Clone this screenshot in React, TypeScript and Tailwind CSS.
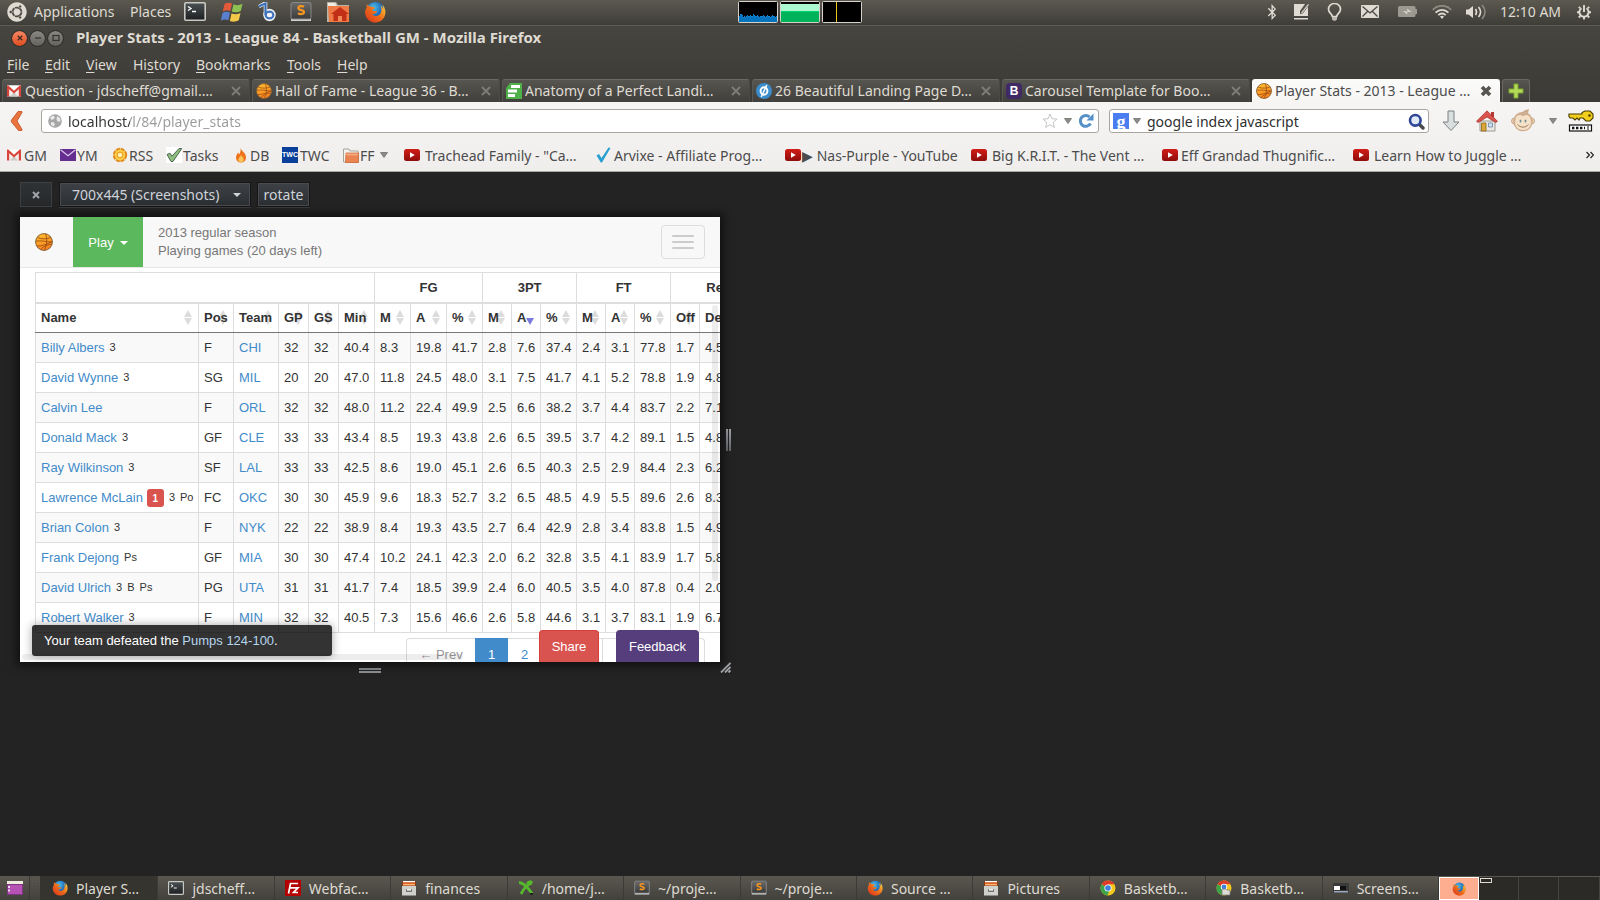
import React from "react";
import { FaUbuntu, FaBluetoothB } from "react-icons/fa";

type IconProps = { className?: string };

/* ---------- shared icons ---------- */

const Firefox = ({ className = "size-4" }: IconProps) => (
  <svg viewBox="0 0 24 24" className={className} aria-hidden="true">
    <defs>
      <linearGradient id="fx-body" x1="0" y1="1" x2="1" y2="0">
        <stop offset="0" stopColor="#d8301c" />
        <stop offset="0.5" stopColor="#ee6b1a" />
        <stop offset="1" stopColor="#ffd93b" />
      </linearGradient>
      <radialGradient id="fx-globe" cx="0.4" cy="0.3" r="0.8">
        <stop offset="0" stopColor="#4cc0ee" />
        <stop offset="0.6" stopColor="#1c62b0" />
        <stop offset="1" stopColor="#122a66" />
      </radialGradient>
    </defs>
    <circle cx="12.5" cy="11.5" r="10.5" fill="url(#fx-globe)" />
    <path
      d="M3 3.500c-.4 1.300-.4 2.400 0 3.600C1.300 9.500.7 12.300 1.500 15.200 3 20.200 7.300 23.400 12.400 23.400 18.600 23.400 23.400 18.500 23.400 12.300c0-3.300-1.300-6.500-3.600-8.600 1 2 1.300 3.600 1.100 5.400-.6-2-1.500-3.200-3-4.200 2.200 4.500 1.100 8.700-1.700 10.500-2.600 1.700-6 .9-7.300-1.300 1.500.4 2.900.1 3.900-.9.700-.7 1.500-.6 1.500-1.200 0-.7-.9-1.200-2-1.100-1.300.1-2.600.4-3.200-.5.3-1.100 1.600-1.600 2.700-2.200-.3-1.500-1.700-2.200-3.600-2C6.800 5.800 4.500 5.500 3 3.500z"
      fill="url(#fx-body)"
    />
  </svg>
);

const Basketball = ({ className = "size-4" }: IconProps) => (
  <svg viewBox="0 0 18 18" className={className} aria-hidden="true">
    <defs>
      <linearGradient id="ball" x1="0.2" y1="0" x2="0.6" y2="1">
        <stop offset="0" stopColor="#ffbe2e" />
        <stop offset="1" stopColor="#fb7d1e" />
      </linearGradient>
    </defs>
    <circle cx="9" cy="9" r="8.400" fill="url(#ball)" stroke="#8a6238" strokeWidth="1" />
    <g fill="none" stroke="#8f4a12" strokeWidth="0.800">
      <path d="M1 8.200c5-1 10 .5 15.800 1" />
      <path d="M2.500 4.600c5 1.800 9 1.500 13.500-.2" />
      <path d="M1.800 13c5 .2 10-1.500 15.400-4.500" />
      <path d="M10.500.8c2 5 1.500 11-1 16.300" />
      <path d="M5.500 16.500c3-3.500 7-5 11-5.200" />
    </g>
  </svg>
);

const Gmail = ({ className = "h-3.5 w-3.5" }: IconProps) => (
  <svg viewBox="0 0 14 12" className={className} aria-hidden="true">
    <rect x="0" y="0.500" width="14" height="11" fill="#f3f0ee" />
    <path d="M0 .5h14L7 7z" fill="#fff" />
    <path d="M3 11.500L7 7l4 4.500z" fill="#cfcac7" />
    <path d="M0 11.500V.5h1.300L7 5.800 12.700.5H14v11h-2.200V4.300L7 8.600 2.200 4.300v7.200z" fill="#d8453a" />
  </svg>
);

const YouTube = ({ className = "h-4 w-4" }: IconProps) => (
  <svg viewBox="0 0 16 16" className={className} aria-hidden="true">
    <defs>
      <linearGradient id="yt" x1="0" y1="0" x2="0" y2="1">
        <stop offset="0" stopColor="#d11d17" />
        <stop offset="1" stopColor="#8f0d0b" />
      </linearGradient>
    </defs>
    <rect y="2" width="16" height="12" rx="2.500" fill="url(#yt)" />
    <path d="M6 5.200v5.600L10.800 8z" fill="#fff" />
  </svg>
);

const Terminal = ({ className = "size-4" }: IconProps) => (
  <svg viewBox="0 0 22 19" className={className} aria-hidden="true">
    <defs>
      <linearGradient id="term" x1="0" y1="0" x2="0" y2="1">
        <stop offset="0" stopColor="#4b5254" />
        <stop offset="1" stopColor="#1c1f20" />
      </linearGradient>
    </defs>
    <rect x="0.800" y="0.800" width="20.400" height="17.400" rx="1" fill="url(#term)" stroke="#c9c9c4" strokeWidth="1.600" />
    <path d="M4 4.500l3 2-3 2M8 9.500h4" fill="none" stroke="#fff" strokeWidth="1.300" />
  </svg>
);

const Sublime = ({ className = "size-4" }: IconProps) => (
  <svg viewBox="0 0 22 20" className={className} aria-hidden="true">
    <defs>
      <linearGradient id="subl" x1="0" y1="0" x2="0" y2="1">
        <stop offset="0" stopColor="#6b6b6b" />
        <stop offset="1" stopColor="#3a3a3a" />
      </linearGradient>
    </defs>
    <path d="M1 1.500h20V19H1z" fill="#cfcfcf" />
    <rect x="1" y="0.500" width="20" height="16.500" rx="1.500" fill="url(#subl)" stroke="#888" />
    <path
      d="M14 4.800c-2-1.200-5.600-1-5.600 1.300 0 2.800 5.600 1.400 5.600 4 0 2.300-4 2.400-6 1.200"
      fill="none"
      stroke="#f7951e"
      strokeWidth="2.200"
    />
  </svg>
);

const FileCabinet = ({ className = "size-4" }: IconProps) => (
  <svg viewBox="0 0 16 16" className={className} aria-hidden="true">
    <path d="M1 1h14v5H1z" fill="#8a3a12" />
    <path d="M2 1h12v1.500H2z" fill="#fff" />
    <path d="M2 2.500h12V4H2z" fill="#e8641b" />
    <path d="M2 4h12v1.500H2z" fill="#f8b27a" />
    <path d="M1 6h14v9.500H1z" fill="#d0d0cd" />
    <path d="M5 9h6v3H5z" fill="#777" />
    <path d="M6 9h4v1.500H6z" fill="#f5f5f5" />
  </svg>
);

const Chrome = ({ className = "size-4" }: IconProps) => (
  <svg viewBox="0 0 16 16" className={className} aria-hidden="true">
    <circle cx="8" cy="8" r="7.500" fill="#f4c91c" />
    <path d="M8 8L1.500 4.200A7.500 7.500 0 0 1 14.500 4.200H8z" fill="#dc3b2c" />
    <path d="M8 8L1.500 4.200a7.500 7.500 0 0 0 5.700 11.200L10.500 9z" fill="#3ba34a" />
    <circle cx="8" cy="8" r="3.600" fill="#fff" />
    <circle cx="8" cy="8" r="2.800" fill="#3f7fe0" />
  </svg>
);

const ChromeWindow = ({ className = "size-4" }: IconProps) => (
  <svg viewBox="0 0 16 16" className={className} aria-hidden="true">
    <circle cx="8" cy="8" r="7.500" fill="#f4c91c" />
    <path d="M8 8L1.500 4.200A7.500 7.500 0 0 1 14.500 4.200H8z" fill="#dc3b2c" />
    <path d="M8 8L1.500 4.200a7.500 7.500 0 0 0 5.700 11.200L10.500 9z" fill="#3ba34a" />
    <circle cx="8" cy="7" r="3.200" fill="#fff" />
    <circle cx="8" cy="7" r="2.400" fill="#3f7fe0" />
    <path d="M6 9h4l1 1h3v5H6z" fill="#dedbd2" stroke="#777" strokeWidth="0.700" />
  </svg>
);

const TriangleDown = ({ className = "" }: IconProps) => (
  <svg viewBox="0 0 8 6" className={`h-1.5 w-2 shrink-0 ${className}`} aria-hidden="true">
    <path d="M.5.5h7L4 5.500z" fill="#8b8b88" stroke="#70706c" strokeWidth="0.800" />
  </svg>
);

/* ---------- top panel ---------- */

const BPlayer = () => (
  <svg viewBox="0 0 18 20" className="h-5 w-[18px]" aria-hidden="true">
    <path d="M1 4.500L7.500 1v13" fill="none" stroke="#f2f4f7" strokeWidth="3.600" />
    <circle cx="11.500" cy="13" r="5.200" fill="#f2f4f7" stroke="#f2f4f7" strokeWidth="2" />
    <path d="M1 4.300L7.500 1.500V13" fill="none" stroke="#3a6fb8" strokeWidth="2.200" />
    <ellipse cx="11.500" cy="13" rx="3.800" ry="3.300" fill="none" stroke="#3f74bd" strokeWidth="2.200" />
  </svg>
);

const HomeFolder = () => (
  <svg viewBox="0 0 24 22" className="h-[22px] w-6" aria-hidden="true">
    <path d="M1 1h9l2 3h11v17H1z" fill="#b9b3a8" />
    <path d="M2 2h7l2 3h11v3H2z" fill="#f0ece4" />
    <path d="M2 5h21v16H3z" fill="#ee7a45" />
    <path d="M14 6l9 7h-2.500v7H7.500v-7H5z" fill="#c22f17" />
    <path d="M12 15h4v5h-4z" fill="#f08a58" />
  </svg>
);

const WindowsFlag = () => (
  <svg viewBox="0 0 24 22" className="h-[22px] w-6" aria-hidden="true">
    <path d="M4.500 3C7 1.300 9.500 1.300 12 2.600L10.300 10C7.800 8.800 5.300 9 2.800 10.500z" fill="#e4593a" />
    <path d="M13.500 3.200c2.800 1.300 5.700 1.300 9-.4L20.800 10c-3 1.600-6 1.700-9 .6z" fill="#8fc152" />
    <path d="M2.500 12C5 10.500 7.500 10.500 10 11.700L8.300 19.300C5.800 18 3.300 18.200.8 19.700z" fill="#5a7fd0" />
    <path d="M11.500 12.400c2.900 1.200 5.900 1.100 9-.5l-1.700 7.300c-3 1.700-6 1.900-9 .8z" fill="#f3c84a" />
  </svg>
);

const cpu = [6, 8, 8, 7, 5, 6, 5, 6, 7, 6, 6, 7, 6, 6, 8, 7, 6, 6, 7, 6, 5, 6, 6, 6, 7, 6, 5, 6, 7, 6, 6, 5, 6, 7, 6, 6, 5, 6];

const Monitors = () => (
  <div className="flex gap-0.5" aria-label="System monitor">
    <svg viewBox="0 0 40 22" className="h-[22px] w-10">
      <rect x="0.500" y="0.500" width="39" height="21" rx="1" fill="#000" stroke="#d5d2cb" />
      {cpu.map((h, i) => (
        <React.Fragment key={i}>
          <rect x={i + 1} y={21 - h} width="1" height={h} fill="#0d86d8" />
          <rect x={i + 1} y={22 - h} width="1" height={h - 1} fill="#0673bd" />
        </React.Fragment>
      ))}
    </svg>
    <svg viewBox="0 0 40 22" className="h-[22px] w-10">
      <rect x="0.500" y="0.500" width="39" height="21" rx="1" fill="#000" stroke="#d5d2cb" />
      <rect x="1" y="3" width="38" height="8" fill="#aaf7d0" />
      <rect x="1" y="10" width="38" height="11" fill="#00b35a" />
      <rect x="1" y="10" width="38" height="1" fill="#00d46c" />
    </svg>
    <svg viewBox="0 0 40 22" className="h-[22px] w-10">
      <rect x="0.500" y="0.500" width="39" height="21" rx="1" fill="#000" stroke="#d5d2cb" />
      <rect x="14" y="1" width="1" height="20" fill="#e8c81e" />
    </svg>
  </div>
);

const Tray = () => (
  <div className="flex flex-1 items-center justify-end pr-2 text-[#dfdbd2]">
    <FaBluetoothB className="mr-4 h-4 w-2.5" />
    <svg viewBox="0 0 17 17" className="mr-[17px] size-[17px]" aria-hidden="true">
      <path d="M1 1h11l-5 7v3l3-1 5-7v10H1z" fill="#dfdbd2" />
      <path d="M8 9.500L15 .8l1.300 1L9.500 10.300l-2 .7z" fill="#dfdbd2" stroke="#4a4843" strokeWidth="0.500" />
      <path d="M1 15h14v1.500H1z" fill="#dfdbd2" />
    </svg>
    <svg viewBox="0 0 15 18" className="mr-[19px] h-[18px] w-[15px]" aria-hidden="true">
      <path
        d="M5.300 13.500c0-2.500-3.800-3.500-3.800-7.200a6 5.800 0 0 1 12 0c0 3.700-3.800 4.700-3.800 7.200z"
        fill="none"
        stroke="#dfdbd2"
        strokeWidth="1.700"
      />
      <path d="M5 14h5v2.500l-1.500 1.200h-2L5 16.500z" fill="#bdb9b0" />
    </svg>
    <svg viewBox="0 0 18 13" className="mr-[19px] h-[13px] w-[18px]" aria-hidden="true">
      <rect width="18" height="13" rx="0.800" fill="#dfdbd2" />
      <path d="M1.500 1.500L9 8l7.500-6.500M1.500 11.500l5-5M16.500 11.500l-5-5" fill="none" stroke="#4a4843" strokeWidth="1.300" />
    </svg>
    <svg viewBox="0 0 19 11" className="mr-[15px] h-[11px] w-[19px]" aria-hidden="true">
      <path d="M1.500 0h14.500a1.500 1.500 0 0 1 1.500 1.500V3H19v5h-1.500v1.500A1.500 1.500 0 0 1 16 11H1.500A1.500 1.500 0 0 1 0 9.500v-8A1.500 1.500 0 0 1 1.500 0z" fill="#9c9990" />
      <path d="M4.500 4.800l5 1-.5-3 5 3.500-5-.9.500 3z" fill="#dfdbd2" />
    </svg>
    <svg viewBox="0 0 20 14" className="mr-3.5 h-3.5 w-5" aria-hidden="true" fill="none" strokeWidth="1.800">
      <path d="M.8 4.800C6-.6 14-.6 19.200 4.800" stroke="#8d8a82" />
      <path d="M3.600 7.600c3.700-3.700 9.100-3.700 12.800 0" stroke="#dfdbd2" />
      <path d="M6.300 10.200c2.200-2.100 5.200-2.100 7.400 0" stroke="#dfdbd2" />
      <path d="M8 11.500q2-1.500 4 0L10 14z" fill="#dfdbd2" />
    </svg>
    <svg viewBox="0 0 21 16" className="mr-[13px] h-4 w-[21px]" aria-hidden="true" fill="none" strokeWidth="1.600">
      <path d="M0 5.500h2.500L7 2v12l-4.500-3.500H0z" fill="#dfdbd2" />
      <path d="M9.500 5c1.200 1.800 1.200 4.200 0 6" stroke="#dfdbd2" />
      <path d="M12.500 3c2.500 3 2.500 7 0 10" stroke="#dfdbd2" />
      <path d="M16 1c4 4.200 4 9.800 0 14" stroke="#8d8a82" />
    </svg>
    <time className="mr-4 w-[60px] text-[14px] whitespace-nowrap">12:10 AM</time>
    <svg viewBox="0 0 16 16" className="size-4" aria-hidden="true" fill="none" stroke="#dfdbd2">
      <path d="M5.500 4.200a4.600 4.600 0 1 0 5 0" strokeWidth="1.900" />
      <path d="M8 1v7" strokeWidth="1.900" />
      <path d="M1 8.300h2M13 8.300h2M2.800 13.500l1.500-1.500M13.200 13.500L11.700 12M8 13v2.500M2.800 2.800l1.400 1.400M13.200 2.800l-1.400 1.400" strokeWidth="1.900" />
    </svg>
  </div>
);

const TopPanel = () => (
  <header className="flex h-[25px] items-center bg-linear-to-b from-[#5c5950] to-[#3e3d38] pb-0.5 text-[14px] text-[#dfdbd2]">
    <div className="flex flex-1 items-center pl-[7px]">
      <FaUbuntu className="size-5 shrink-0" />
      <button className="ml-[7px] w-[84px] text-left">Applications</button>
      <button className="ml-3 w-[42px] text-left">Places</button>
      <div className="ml-3 flex items-center gap-[14px]">
        <Terminal className="h-[19px] w-[22px]" />
        <WindowsFlag />
        <BPlayer />
        <Sublime className="h-5 w-[22px]" />
        <HomeFolder />
        <Firefox className="size-[22px]" />
      </div>
    </div>
    <Monitors />
    <Tray />
  </header>
);

/* ---------- window chrome ---------- */

const TitleBar = () => (
  <div className="flex h-[25px] items-center border-t border-[#5f5b54] pl-3">
    <div className="flex gap-[3px]">
      <button aria-label="Close window" className="grid size-[15px] place-items-center rounded-full bg-linear-to-b from-[#f58763] to-[#df4b1a] outline outline-[#2f2e2a]">
        <svg viewBox="0 0 8 8" className="size-1.5"><path d="M1 1l6 6M7 1L1 7" stroke="#3a2a22" strokeWidth="1.600" /></svg>
      </button>
      <button aria-label="Minimize" className="grid size-[15px] place-items-center rounded-full bg-linear-to-b from-[#8a8882] to-[#65635d] outline outline-[#2f2e2a]">
        <svg viewBox="0 0 8 8" className="size-2"><path d="M1 4h6" stroke="#33322e" strokeWidth="1.200" /></svg>
      </button>
      <button aria-label="Maximize" className="grid size-[15px] place-items-center rounded-full bg-linear-to-b from-[#8a8882] to-[#65635d] outline outline-[#2f2e2a]">
        <svg viewBox="0 0 8 8" className="size-2"><rect x="1" y="1.500" width="6" height="5" fill="none" stroke="#33322e" strokeWidth="1.200" /></svg>
      </button>
    </div>
    <h1 className="ml-[13px] pb-0.5 text-[15px] leading-5 font-bold text-[#dfdbd2]">
      Player Stats - 2013 - League 84 - Basketball GM - Mozilla Firefox
    </h1>
  </div>
);

const menus = [
  { pre: "", key: "F", post: "ile", width: "w-[38px]" },
  { pre: "", key: "E", post: "dit", width: "w-[41px]" },
  { pre: "", key: "V", post: "iew", width: "w-[47px]" },
  { pre: "Hi", key: "s", post: "tory", width: "w-[63px]" },
  { pre: "", key: "B", post: "ookmarks", width: "w-[91px]" },
  { pre: "", key: "T", post: "ools", width: "w-[50px]" },
  { pre: "", key: "H", post: "elp", width: "w-[50px]" },
];

const MenuBar = () => (
  <nav className="flex h-7 items-center pl-[7px] text-[14px] text-[#dfdbd2]">
    {menus.map((m) => (
      <button key={m.pre + m.key + m.post} className={`${m.width} text-left`}>
        {m.pre}
        <span className="underline underline-offset-2">{m.key}</span>
        {m.post}
      </button>
    ))}
  </nav>
);

const AnatomyIcon = () => (
  <svg viewBox="0 0 16 16" className="size-4" aria-hidden="true">
    <path d="M4 0h12v16H0V5z" fill="#4fb04a" />
    <path d="M5 2h9v3H5zM2 6.500h9v3H2zM2 11h7v3H2z" fill="#fff" />
  </svg>
);
const LandingIcon = () => (
  <svg viewBox="0 0 16 16" className="size-4" aria-hidden="true">
    <circle cx="8" cy="8" r="8" fill="#3b8ccb" />
    <ellipse cx="8" cy="8" rx="3.400" ry="3.800" fill="none" stroke="#fff" strokeWidth="2" />
    <path d="M10.800 2L5.200 14" stroke="#fff" strokeWidth="1.500" />
  </svg>
);
const BootstrapIcon = () => (
  <span className="grid size-4 place-items-center rounded-sm bg-[#3f2a66] font-['Liberation_Sans',sans-serif] text-[12px] leading-none font-bold text-white">
    B
  </span>
);

const tabs = [
  { title: "Question - jdscheff@gmail.…", icon: <Gmail /> },
  { title: "Hall of Fame - League 36 - B…", icon: <Basketball /> },
  { title: "Anatomy of a Perfect Landi…", icon: <AnatomyIcon /> },
  { title: "26 Beautiful Landing Page D…", icon: <LandingIcon /> },
  { title: "Carousel Template for Boo…", icon: <BootstrapIcon /> },
  { title: "Player Stats - 2013 - League …", icon: <Basketball />, active: true },
];

const TabStrip = () => (
  <div className="flex h-6 items-end gap-0.5 pl-0.5" role="tablist">
    {tabs.map((t) => (
      <div
        key={t.title}
        className={`flex h-[23px] w-[248px] items-center rounded-t-[3px] border border-b-0 pr-[7px] pl-[3px] text-[14px] ${
          t.active
            ? "border-[#fbfbfa] bg-linear-to-b from-[#fbfbfa] to-[#f6f5f4] text-[#4c4c4c]"
            : "border-[#6b6962] border-r-[#4b4944] border-l-[#5a5852] bg-linear-to-b from-[#575550] to-[#403f3b] text-[#dfdbd2]"
        }`}
      >
        <button role="tab" aria-selected={!!t.active} className="flex min-w-0 flex-1 items-center gap-[3px]">
          <span className="grid size-4 shrink-0 place-items-center">{t.icon}</span>
          <span className="overflow-hidden leading-5 whitespace-nowrap">{t.title}</span>
        </button>
        <button aria-label="Close tab" className="shrink-0">
          <svg viewBox="0 0 12 12" className="size-3">
            <path d="M2 2l8 8M10 2l-8 8" stroke={t.active ? "#55544f" : "#807e78"} strokeWidth={t.active ? 3.600 : 1.800} />
          </svg>
        </button>
      </div>
    ))}
    <button
      aria-label="New tab"
      className="grid h-[23px] w-7 place-items-center rounded-t-[3px] border border-b-0 border-[#6b6962] bg-linear-to-b from-[#575550] to-[#403f3b]"
    >
      <svg viewBox="0 0 16 16" className="size-4">
        <path d="M6 1h4v5h5v4h-5v5H6v-5H1V6h5z" fill="#b4d85a" stroke="#7ba82c" />
      </svg>
    </button>
  </div>
);

const NavBar = () => (
  <div className="flex h-[37px] items-center pt-px pr-1.5 pl-[9px]">
    <button aria-label="Back" className="mr-[15px] w-[17px]">
      <svg viewBox="0 0 17 22" className="h-[22px] w-[17px]">
        <path d="M9 1.500h3.500q1 0 .5 1L8 11l5 8.500q.5 1-.5 1H9.500L2.500 12q-.6-1 0-2z" fill="#ea7440" stroke="#bf4a1b" strokeWidth="0.800" />
      </svg>
    </button>
    <div className="flex h-6 flex-1 items-center rounded-[3px] border border-[#a9a69f] bg-white pr-1 pl-1.5">
      <svg viewBox="0 0 14 14" className="size-3.5 shrink-0" aria-hidden="true">
        <circle cx="7" cy="7" r="6.800" fill="#a6a6a6" />
        <path d="M2 3.500l3-2 2 1.500-1 2-2.500 1zM9 2l3 2 .5 3-2 1-2-2zM3 8l3 .5 1 2-1.500 2L3 11z" fill="#e8e8e8" />
      </svg>
      <input
        aria-label="Address"
        defaultValue="localhost/l/84/player_stats"
        className="ml-1.5 min-w-0 flex-1 bg-linear-to-r from-[#333] from-[62px] to-[#9a9a9a] to-[62px] bg-clip-text text-[14px] text-transparent outline-none"
      />
      <svg viewBox="0 0 16 16" className="mr-1.5 size-4" aria-hidden="true">
        <path d="M8 1l2 4.700 5 .4-3.800 3.300 1.200 5L8 11.700l-4.400 2.700 1.200-5L1 6.100l5-.4z" fill="#fff" stroke="#c4c4c4" />
      </svg>
      <TriangleDown className="mr-1.5" />
      <button aria-label="Reload">
        <svg viewBox="0 0 16 16" className="size-4">
          <path d="M12.500 10.500A5.400 5.400 0 1 1 11.500 4" fill="none" stroke="#5590c9" strokeWidth="3" />
          <path d="M8.500 7.500h7V.5z" fill="#5590c9" />
        </svg>
      </button>
    </div>
    <div className="ml-2.5 flex h-6 w-[320px] items-center rounded-[3px] border border-[#a9a69f] bg-white px-[3px]">
      <span className="grid size-4 shrink-0 place-items-center bg-[#4a7df0] pb-1.5 font-['Liberation_Serif',serif] text-[18px] leading-none font-bold text-white">g</span>
      <TriangleDown className="mx-1" />
      <input aria-label="Search" defaultValue="google index javascript" className="min-w-0 flex-1 bg-transparent pl-0.5 text-[14px] text-[#2f2f2f] outline-none" />
      <button aria-label="Search the web">
        <svg viewBox="0 0 17 17" className="size-[17px]">
          <path d="M10.500 10.500l4.500 4.500" stroke="#4a4a4a" strokeWidth="3.400" strokeLinecap="round" />
          <circle cx="7.300" cy="7.300" r="5.300" fill="#dfe9f7" stroke="#2f4597" strokeWidth="2.600" />
        </svg>
      </button>
    </div>
    <button aria-label="Downloads" className="ml-[13px]">
      <svg viewBox="0 0 18 22" className="h-[22px] w-[18px]">
        <path d="M6 1h6v11h5L9 20.500 1 12h5z" fill="#d9dedf" stroke="#7a8082" />
      </svg>
    </button>
    <button aria-label="Home" className="ml-4">
      <svg viewBox="0 0 22 22" className="size-[22px]">
        <path d="M4 11h15v10H4z" fill="#e9e9e4" stroke="#9a9a92" />
        <path d="M15 2h3v5h-3z" fill="#b33a35" />
        <path d="M11 .8l10.500 10.500-1.800 1.200L11 7l-8.700 5.500L.5 11.300z" fill="#d9534c" stroke="#a52a24" strokeWidth="0.700" />
        <path d="M5.500 13h4.500v8H5.500z" fill="#d9a63a" stroke="#8f6413" strokeWidth="0.800" />
        <path d="M12.500 13h4v4h-4z" fill="#cfe0f2" stroke="#6b86a6" strokeWidth="0.800" />
      </svg>
    </button>
    <button aria-label="Greasemonkey" className="ml-[13px]">
      <svg viewBox="0 0 24 24" className="size-6">
        <path d="M12 3C13 1 16 1 18 0l-1 4z" fill="#c8a889" />
        <circle cx="3.500" cy="12" r="3" fill="#ecd3b6" stroke="#c9a98a" />
        <circle cx="20.500" cy="12" r="3" fill="#ecd3b6" stroke="#c9a98a" />
        <circle cx="12" cy="12.500" r="9.800" fill="#cfae8f" />
        <path d="M12 7.500c2-2.500 7-2 7.500 2.500.5 3 1 5-1 8-2.500 4-10.500 4-13 0-2-3-1.500-5-1-8C5 5.500 10 5 12 7.500z" fill="#f5e1c8" />
        <ellipse cx="9.500" cy="12" rx="0.900" ry="1.500" fill="#6a8c95" />
        <ellipse cx="14.500" cy="12" rx="0.900" ry="1.500" fill="#6a8c95" />
        <path d="M6.500 15.500c3 3.500 8 3.500 11 0" fill="none" stroke="#9a7a5c" />
      </svg>
    </button>
    <TriangleDown className="ml-3.5" />
    <button aria-label="Password manager" className="ml-[11px]">
      <svg viewBox="0 0 26 22" className="h-[22px] w-[26px]">
        <path d="M1 4h13V2.500L17 1h5l3 3v4l-3 3h-4l-3-3H12l-1 2-2-2-2 2-2-2H2L.800 6z" fill="#f2cf1d" stroke="#4a3c00" strokeWidth="1.100" />
        <circle cx="21.500" cy="5.500" r="1.300" fill="#4a3c00" />
        <rect x="1.500" y="15" width="22" height="6" fill="#fff" stroke="#111" strokeWidth="1.200" />
        <path d="M4 18h13" stroke="#111" strokeWidth="2.400" strokeDasharray="2.400 1.600" />
        <path d="M20 16v4" stroke="#111" />
      </svg>
    </button>
  </div>
);

/* ---------- bookmarks ---------- */

const YMail = () => (
  <svg viewBox="0 0 16 12" className="h-3 w-4" aria-hidden="true">
    <rect width="16" height="12" fill="#662d91" />
    <path d="M.5.800L8 6.800l7.500-6" fill="none" stroke="#d9c8ea" strokeWidth="1.200" />
  </svg>
);
const Rss = () => (
  <svg viewBox="0 0 16 16" className="size-4" aria-hidden="true">
    <circle cx="8" cy="8" r="6.200" fill="#fbd24b" stroke="#e08a1e" strokeWidth="2" strokeDasharray="4 0.870" />
    <circle cx="8" cy="8" r="2.800" fill="#fff3b8" stroke="#f0a024" strokeWidth="1.200" />
  </svg>
);
const Tasks = () => (
  <svg viewBox="0 0 16 16" className="size-4" aria-hidden="true">
    <rect width="16" height="16" fill="#fff" />
    <path d="M1 7.500l3-1.300 2 3L13 1.500h2.800L7 14.500H5z" fill="#8fbf7d" stroke="#40584a" strokeWidth="0.900" />
  </svg>
);
const Flame = () => (
  <svg viewBox="0 0 12 16" className="h-4 w-3" aria-hidden="true">
    <path d="M5.500.5c.5 3.500 5.500 5 5.500 10 0 3-2.200 5-5 5s-5-2-5-5c0-2.500 1.500-3.500 2-5 .6.6 1 1.300 1 2C5.500 5.500 6 3 5.500.5z" fill="#f0731c" />
    <path d="M6 8c1 1.700 2.700 2.700 2.700 4.700C8.700 14.500 7.500 15.300 6 15.300s-2.700-.9-2.700-2.600C3.300 11 5.300 10 6 8z" fill="#fbc45a" />
  </svg>
);
const Twc = () => (
  <span className="grid size-4 place-items-center overflow-hidden bg-[#0a3f9c] font-['Liberation_Sans',sans-serif] text-[7px] font-bold text-white">TWC</span>
);
const Folder = () => (
  <svg viewBox="0 0 16 15" className="h-[15px] w-4" aria-hidden="true">
    <path d="M.500 1h5.500l1 2H15v11H.500z" fill="#f4f2ee" stroke="#a9a49b" />
    <path d="M3 5h12.500v9.500H2.500z" fill="#ea8450" stroke="#c95f2c" strokeWidth="0.700" />
    <path d="M3 5.500h12v2H3z" fill="#f5a77e" />
  </svg>
);
const Check = () => (
  <svg viewBox="0 0 15 16" className="h-4 w-[15px]" aria-hidden="true">
    <path d="M.5 8.500L3 7l2.500 4L12.500.500l2 .5L6 15.500H4.800z" fill="#2a9fd0" />
  </svg>
);

const bookmarks = [
  { icon: <Gmail />, label: "GM", width: "w-[53px]", gap: "gap-[3px]" },
  { icon: <YMail />, label: "YM", width: "w-[52px]", gap: "gap-px" },
  { icon: <Rss />, label: "RSS", width: "w-[54px]", gap: "gap-px" },
  { icon: <Tasks />, label: "Tasks", width: "w-[69px]", gap: "gap-px" },
  { icon: <Flame />, label: "DB", width: "w-[47px]", gap: "gap-[3px]" },
  { icon: <Twc />, label: "TWC", width: "w-[61px]", gap: "gap-0.5" },
  { icon: <Folder />, label: "FF", width: "w-[61px]", gap: "gap-px", menu: true },
  { icon: <YouTube />, label: "Trachead Family - \"Ca…", width: "w-[192px]", gap: "gap-[5px]" },
  { icon: <Check />, label: "Arvixe - Affiliate Prog…", width: "w-[189px]", gap: "gap-[3px]" },
  { icon: <YouTube />, label: "▶ Nas-Purple - YouTube", width: "w-[186px]", gap: "gap-px" },
  { icon: <YouTube />, label: "Big K.R.I.T. - The Vent …", width: "w-[191px]", gap: "gap-[5px]" },
  { icon: <YouTube />, label: "Eff Grandad Thugnific…", width: "w-[191px]", gap: "gap-[3px]" },
  { icon: <YouTube />, label: "Learn How to Juggle …", width: "w-[180px]", gap: "gap-[5px]" },
];

const BookmarksBar = () => (
  <div className="flex h-8 items-center pr-1.5 pl-[7px] text-[14px] text-[#4c4c4c]">
    {bookmarks.map((b) => (
      <a key={b.label} href="#" className={`flex shrink-0 items-center ${b.width} ${b.gap}`}>
        <span className="shrink-0">{b.icon}</span>
        <span className="whitespace-nowrap">{b.label}</span>
        {b.menu && <TriangleDown className="ml-1" />}
      </a>
    ))}
    <button aria-label="More bookmarks" className="ml-auto">
      <svg viewBox="0 0 8 8" className="size-2"><path d="M.5 1L3.500 4l-3 3M4.500 1L7.500 4l-3 3" fill="none" stroke="#222" strokeWidth="1.200" /></svg>
    </button>
  </div>
);

/* ---------- player stats page ---------- */

type Player = { name: string; rank?: string; skills: string; pos: string; team: string; stats: string[] };

const players: Player[] = [
  { name: "Billy Albers", skills: "3", pos: "F", team: "CHI", stats: "32 32 40.4 8.3 19.8 41.7 2.8 7.6 37.4 2.4 3.1 77.8 1.7 4.5".split(" ") },
  { name: "David Wynne", skills: "3", pos: "SG", team: "MIL", stats: "20 20 47.0 11.8 24.5 48.0 3.1 7.5 41.7 4.1 5.2 78.8 1.9 4.8".split(" ") },
  { name: "Calvin Lee", skills: "", pos: "F", team: "ORL", stats: "32 32 48.0 11.2 22.4 49.9 2.5 6.6 38.2 3.7 4.4 83.7 2.2 7.1".split(" ") },
  { name: "Donald Mack", skills: "3", pos: "GF", team: "CLE", stats: "33 33 43.4 8.5 19.3 43.8 2.6 6.5 39.5 3.7 4.2 89.1 1.5 4.8".split(" ") },
  { name: "Ray Wilkinson", skills: "3", pos: "SF", team: "LAL", stats: "33 33 42.5 8.6 19.0 45.1 2.6 6.5 40.3 2.5 2.9 84.4 2.3 6.2".split(" ") },
  { name: "Lawrence McLain", rank: "1", skills: "3 Po", pos: "FC", team: "OKC", stats: "30 30 45.9 9.6 18.3 52.7 3.2 6.5 48.5 4.9 5.5 89.6 2.6 8.3".split(" ") },
  { name: "Brian Colon", skills: "3", pos: "F", team: "NYK", stats: "22 22 38.9 8.4 19.3 43.5 2.7 6.4 42.9 2.8 3.4 83.8 1.5 4.9".split(" ") },
  { name: "Frank Dejong", skills: "Ps", pos: "GF", team: "MIA", stats: "30 30 47.4 10.2 24.1 42.3 2.0 6.2 32.8 3.5 4.1 83.9 1.7 5.8".split(" ") },
  { name: "David Ulrich", skills: "3 B Ps", pos: "PG", team: "UTA", stats: "31 31 41.7 7.4 18.5 39.9 2.4 6.0 40.5 3.5 4.0 87.8 0.4 2.0".split(" ") },
  { name: "Robert Walker", skills: "3", pos: "F", team: "MIN", stats: "32 32 40.5 7.3 15.6 46.6 2.6 5.8 44.6 3.1 3.7 83.1 1.9 6.7".split(" ") },
];

const columns = [
  { label: "Name", width: "w-[163px]" },
  { label: "Pos", width: "w-[35px]" },
  { label: "Team", width: "w-[45px]" },
  { label: "GP", width: "w-[30px]" },
  { label: "GS", width: "w-[30px]" },
  { label: "Min", width: "w-[36px]" },
  { label: "M", width: "w-[36px]" },
  { label: "A", width: "w-[36px]" },
  { label: "%", width: "w-[36px]" },
  { label: "M", width: "w-[29px]" },
  { label: "A", width: "w-[29px]", sorted: true },
  { label: "%", width: "w-[36px]" },
  { label: "M", width: "w-[29px]" },
  { label: "A", width: "w-[29px]" },
  { label: "%", width: "w-[36px]" },
  { label: "Off", width: "w-[29px]" },
  { label: "Def", width: "w-[67px]" },
];

const groups = [
  { label: "", span: 6 },
  { label: "FG", span: 3 },
  { label: "3PT", span: 3 },
  { label: "FT", span: 3 },
  { label: "Reb", span: 2 },
];

const StatsTable = () => (
  <table className="w-[731px] table-fixed border-collapse text-[13px] leading-[19px] text-[#333]">
    <colgroup>
      {columns.map((c, i) => (
        <col key={i} className={c.width} />
      ))}
    </colgroup>
    <thead>
      <tr className="h-[30px]">
        {groups.map((g) => (
          <th key={g.label} colSpan={g.span} scope="colgroup" className="border border-b-2 border-[#ddd] p-0 font-bold">
            {g.label}
          </th>
        ))}
      </tr>
      <tr className="h-[30px]">
        {columns.map((c, i) => (
          <th key={i} scope="col" className="relative border border-b-[#777] border-[#ddd] p-0 pl-[5px] text-left font-bold whitespace-nowrap">
            <svg viewBox="0 0 8 15" className="absolute top-1.5 right-1.5 h-[15px] w-2" aria-hidden="true">
              {c.sorted ? (
                <path d="M0 8h8l-4 7z" fill="#7b7bdd" />
              ) : (
                <path d="M0 7h8L4 0zM0 8h8l-4 7z" fill="#dcdcdc" />
              )}
            </svg>
            <span className="relative">{c.label}</span>
          </th>
        ))}
      </tr>
    </thead>
    <tbody>
      {players.map((p) => (
        <tr key={p.name} className="h-[30px] odd:bg-[#f9f9f9]">
          <td className="border border-[#ddd] p-0 pl-[5px]">
            <div className="flex items-center whitespace-nowrap">
              <a href="#" className="text-[#428bca]">{p.name}</a>
              {p.rank && (
                <span className="ml-1 grid h-[18px] w-[17px] place-items-center rounded-[3px] bg-[#d9534f] text-[10px] font-bold text-white">
                  {p.rank}
                </span>
              )}
              <span className="ml-[5px] flex gap-[5px] text-[11px]">
                {p.skills.split(" ").map((s) => (
                  <span key={s}>{s}</span>
                ))}
              </span>
            </div>
          </td>
          <td className="border border-[#ddd] p-0 pl-[5px]">{p.pos}</td>
          <td className="border border-[#ddd] p-0 pl-[5px]">
            <a href="#" className="text-[#428bca]">{p.team}</a>
          </td>
          {p.stats.map((s, i) => (
            <td key={i} className="border border-[#ddd] p-0 pl-[5px]">{s}</td>
          ))}
        </tr>
      ))}
    </tbody>
  </table>
);

const Pagination = () => (
  <nav aria-label="Pages" className="mt-[5px] mr-[15px] ml-auto flex h-8 w-[299px] rounded-t-[4px] border border-b-0 border-[#ddd] text-[13px] leading-[31px] text-[#428bca]">
    <button disabled className="w-[68px] text-center text-[#999]">← Prev</button>
    <button aria-current="page" className="-mt-px w-[33px] bg-[#428bca] text-white">1</button>
    <button className="w-[33px]">2</button>
    <button aria-label="Page 3" className="flex-1 border-l border-[#ddd]" />
    <button aria-label="Page 4" className="flex-1 border-l border-[#ddd]" />
    <button aria-label="Next page" className="w-[102px] border-l border-[#ddd]" />
  </nav>
);

const GamePage = () => (
  <section className="relative h-[445px] w-[700px] overflow-hidden bg-white font-['Liberation_Sans',Arial,sans-serif] text-[13px] shadow-[0_0_8px_4px_rgba(0,0,0,0.5)]">
    <div className="flex h-[51px] items-center border-b border-[#e7e7e7] bg-[#f8f8f8] text-[#777]">
      <a href="#" aria-label="Basketball GM" className="ml-[15px]"><Basketball className="size-[18px]" /></a>
      <button className="ml-5 flex h-[50px] w-[70px] items-center justify-center gap-1.5 bg-[#5cb85c] pt-px text-white">
        Play
        <svg viewBox="0 0 8 4" className="h-1 w-2" aria-hidden="true"><path d="M0 0h8L4 4z" fill="#fff" /></svg>
      </button>
      <p className="ml-[15px] leading-[18px]">
        2013 regular season
        <br />
        Playing games (20 days left)
      </p>
      <button aria-label="Toggle navigation" className="mr-[15px] ml-auto flex h-[34px] w-11 flex-col items-center justify-center gap-1 rounded-[4px] border border-[#ddd]">
        <span className="h-0.5 w-[22px] rounded-[1px] bg-[#ccc]" />
        <span className="h-0.5 w-[22px] rounded-[1px] bg-[#ccc]" />
        <span className="h-0.5 w-[22px] rounded-[1px] bg-[#ccc]" />
      </button>
    </div>
    <div className="mt-1 ml-[15px] overflow-hidden">
      <StatsTable />
    </div>
    <Pagination />

    <div className="absolute top-[88px] right-0.5 h-[276px] w-1.5 rounded-full bg-black/7" />
    <div className="absolute bottom-0.5 left-0.5 h-1.5 w-[441px] rounded-full bg-black/7" />
    <div role="status" className="absolute bottom-1.5 left-3 flex h-[31px] w-[300px] items-center rounded-[3px] bg-black/80 px-3 text-white shadow-[0_0_10px_rgba(0,0,0,0.35)]">
      <p>
        Your team defeated the <a href="#" className="text-[#b5d5ee]">Pumps</a> <a href="#" className="text-[#b5d5ee]">124-100</a>.
      </p>
    </div>
    <div className="absolute right-[21px] bottom-0 flex gap-[17px] text-white">
      <button className="h-8 w-[60px] rounded-t-[4px] border border-b-0 border-[#d43f3a] bg-[#d9534f]">Share</button>
      <button className="h-8 w-[83px] rounded-t-[4px] border border-b-0 border-[#563d7c] bg-[#563d7c]">Feedback</button>
    </div>
  </section>
);

/* ---------- responsive design view ---------- */

const toolButton = "border border-[#161616] bg-linear-to-b from-[#3e4247] to-[#2b2e31] shadow-[inset_0_0_0_1px_#484c50,0_1px_0_#3a3a3a]";

const ResponsiveView = () => (
  <main className="flex-1 bg-[#232323] px-5 pt-2.5">
    <div className="flex items-center text-[14px] text-[#ced3d9]">
      <button aria-label="Leave responsive view" className="mr-[7px] grid h-[25px] w-8 place-items-center border border-[#3c4043] bg-linear-to-b from-[#2f3235] to-[#26282a]">
        <svg viewBox="0 0 8 8" className="size-2"><path d="M1 1l6 6M7 1L1 7" stroke="#a0a5aa" strokeWidth="2" /></svg>
      </button>
      <div className="relative mr-1.5">
        <select aria-label="Viewport size" className={`h-[25px] w-[192px] appearance-none pl-3 ${toolButton}`}>
          <option>700x445 (Screenshots)</option>
        </select>
        <svg viewBox="0 0 8 4" className="pointer-events-none absolute top-[11px] right-2.5 h-1 w-2" aria-hidden="true"><path d="M0 0h8L4 4z" fill="#ced3d9" /></svg>
      </div>
      <button className={`h-[25px] w-[53px] ${toolButton}`}>rotate</button>
    </div>
    <div className="mt-2.5 inline-grid grid-cols-[auto_11px] grid-rows-[auto_11px]">
      <GamePage />
      <span className="flex w-[11px] items-center justify-end gap-px self-center">
        <span className="h-[22px] w-0.5 bg-linear-to-b from-[#a5a8ab] to-[#65686b]" />
        <span className="h-[22px] w-0.5 bg-linear-to-b from-[#a5a8ab] to-[#65686b]" />
      </span>
      <span className="flex h-[11px] flex-col items-center justify-end gap-px">
        <span className="h-0.5 w-[22px] bg-[#8d9094]" />
        <span className="h-0.5 w-[22px] bg-[#8d9094]" />
      </span>
      <svg viewBox="0 0 11 11" className="size-[11px]" aria-hidden="true">
        <path d="M1 10.500L10.500 1M5 10.500L10.500 5M8.500 10.500l2-2" stroke="#a5a8ab" strokeWidth="1.800" />
      </svg>
    </div>
  </main>
);

/* ---------- task bar ---------- */

const FileZilla = () => (
  <svg viewBox="0 0 16 16" className="size-4" aria-hidden="true">
    <rect width="16" height="16" fill="#b30000" />
    <path d="M3.500 13.500L5.500 3.500h7.500M4.800 7.800h4M8 7.800h5L8.500 12.500h4.500" fill="none" stroke="#fff" strokeWidth="1.700" />
  </svg>
);
const Vines = () => (
  <svg viewBox="0 0 16 16" className="size-4" aria-hidden="true">
    <path d="M1 2.500c4 0 8 4 13 11M14 3C10 4 6 8 3 14M9 4q3-4 5-1" fill="none" stroke="#57b82e" strokeWidth="2.800" />
    <path d="M12 13h3v2h-3z" fill="#222" />
  </svg>
);
const Shot = () => (
  <svg viewBox="0 0 16 10" className="h-2.5 w-4" aria-hidden="true">
    <rect width="16" height="10" rx="1" fill="#3a3a3a" />
    <path d="M1 3h6v4H1z" fill="#fff" />
    <path d="M7 3h6v4H7z" fill="#111" />
    <path d="M1 8h14v1.500H1z" fill="#9aa9bd" />
  </svg>
);

const tasks = [
  { icon: <Firefox />, label: "Player S…", active: true },
  { icon: <Terminal />, label: "jdscheff…" },
  { icon: <FileZilla />, label: "Webfac…" },
  { icon: <FileCabinet />, label: "finances" },
  { icon: <Vines />, label: "/home/j…" },
  { icon: <Sublime />, label: "~/proje…" },
  { icon: <Sublime />, label: "~/proje…" },
  { icon: <Firefox />, label: "Source …" },
  { icon: <FileCabinet />, label: "Pictures" },
  { icon: <Chrome />, label: "Basketb…" },
  { icon: <ChromeWindow />, label: "Basketb…" },
  { icon: <Shot />, label: "Screens…" },
];

const TaskBar = () => (
  <footer className="flex h-6 bg-linear-to-b from-[#5a574f] to-[#43413c] text-[14px] text-[#dfdbd2]">
    <button aria-label="Show desktop" className="grid w-[30px] place-items-center border-r border-[#3c3a36]">
      <svg viewBox="0 0 16 14" className="h-3.5 w-4">
        <rect width="16" height="14" fill="#7d3582" />
        <rect width="16" height="3" fill="#eeebdc" />
        <rect x="1" y="4" width="14" height="9" fill="#b552b4" />
        <path d="M1 5h2v2H1zM1 8.500h2v2H1z" fill="#f0dcf0" />
      </svg>
    </button>
    <span className="w-2.5 bg-[radial-gradient(#4a4842_1px,transparent_1px)] bg-size-[3px_3px]" />
    {tasks.map((t, i) => (
      <button
        key={i}
        className={`flex min-w-0 flex-1 items-center gap-2 border-r border-[#3c3a36] pl-2.5 ${t.active ? "bg-[#35342f] pl-3" : ""}`}
      >
        <span className="shrink-0">{t.icon}</span>
        <span className="whitespace-nowrap">{t.label}</span>
      </button>
    ))}
    <div className="flex w-[161px] pt-px" aria-label="Workspaces">
      <button aria-label="Workspace 1" className="grid w-10 place-items-center border border-white bg-[#feae90]">
        <Firefox className="size-3.5" />
      </button>
      <button aria-label="Workspace 2" className="flex w-10 items-start border-r border-[#45443f] bg-[#2b2a27] pt-px pl-px">
        <span className="h-[5px] w-3 border border-[#dfdbd2]" />
      </button>
      <button aria-label="Workspace 3" className="w-10 border-r border-[#45443f] bg-[#2b2a27]" />
      <button aria-label="Workspace 4" className="flex-1 border-r border-[#45443f] bg-[#2b2a27]" />
    </div>
  </footer>
);

export default function App() {
  return (
    <div className="flex min-h-screen flex-col bg-[#232323] font-['Noto_Sans','Open_Sans',sans-serif]">
      <TopPanel />
      <div className="bg-linear-to-b from-[#474540] to-[#3b3a36]">
        <TitleBar />
        <MenuBar />
        <TabStrip />
      </div>
      <div className="border-b border-[#a9aba3] bg-linear-to-b from-[#f6f5f4] to-[#f0eeed]">
        <NavBar />
        <BookmarksBar />
      </div>
      <ResponsiveView />
      <TaskBar />
    </div>
  );
}
